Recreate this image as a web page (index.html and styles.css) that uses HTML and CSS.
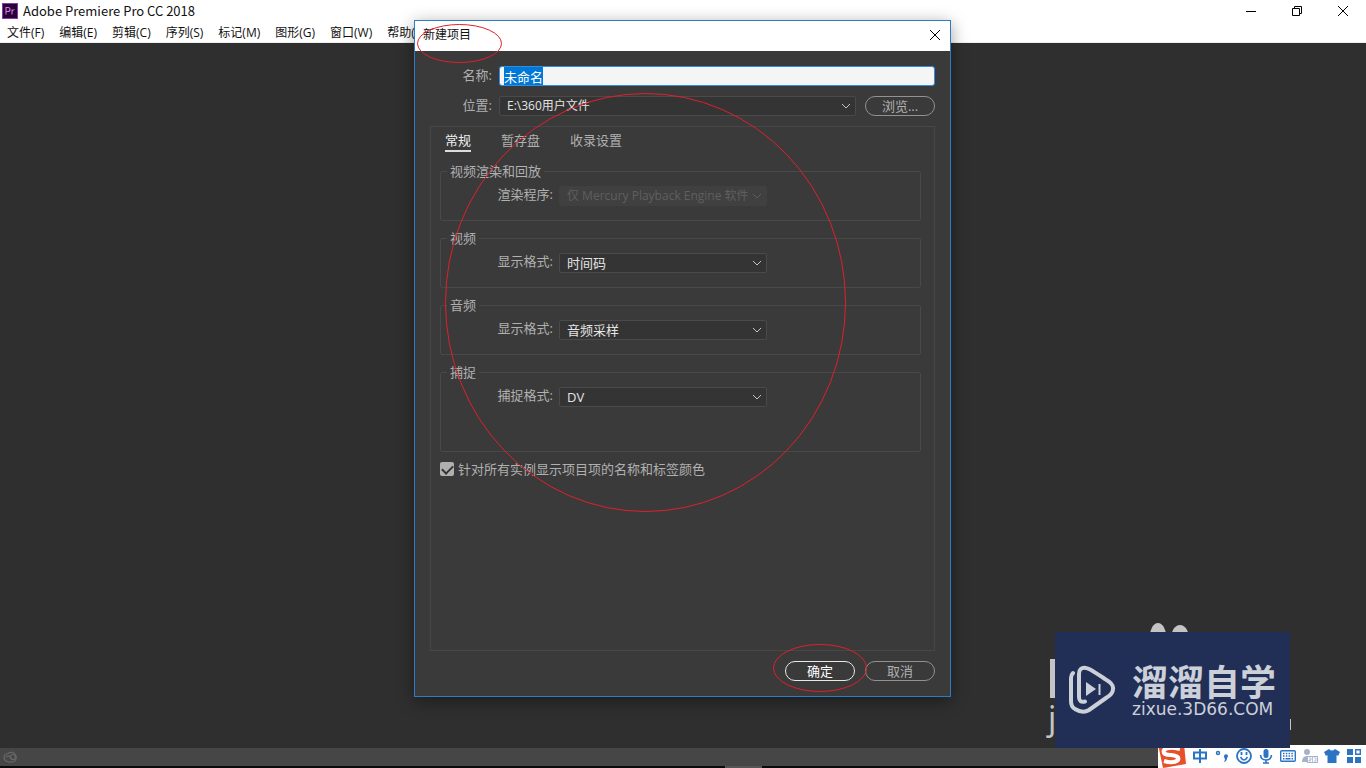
FILE: index.html
```html
<!DOCTYPE html>
<html lang="zh-CN">
<head>
<meta charset="utf-8">
<title>Adobe Premiere Pro CC 2018</title>
<link rel="stylesheet" href="styles.css">
</head>
<body>
<div class="app">
  <header class="titlebar">
    <svg class="app-icon" viewBox="0 0 16 16" aria-hidden="true"><rect width="16" height="16" fill="#8a3aa8"/><rect x="1" y="1" width="14" height="14" fill="#2a0038"/><path d="M4 11.500V4.500H6Q8 4.500 8 6.500T6 8.500H4M10 11.500V6.500M10 8.500Q10.500 6.500 12.500 6.700" fill="none" stroke="#cf78e8" stroke-width="1.100"/></svg>
    <h1 class="app-title">Adobe Premiere Pro CC 2018</h1>
    <div class="window-controls">
      <button type="button" aria-label="最小化"><svg viewBox="0 0 12 12"><path d="M1 6.500H11"/></svg></button>
      <button type="button" aria-label="还原"><svg viewBox="0 0 12 12"><path d="M1.500 3.500H8.500V10.500H1.500ZM3.500 3.500V1.500H10.500V8.500H8.500"/></svg></button>
      <button type="button" aria-label="关闭"><svg viewBox="0 0 12 12"><path d="M1 1L11 11M11 1L1 11"/></svg></button>
    </div>
  </header>
  <nav class="menubar">
    <button type="button">文件(F)</button>
    <button type="button">编辑(E)</button>
    <button type="button">剪辑(C)</button>
    <button type="button">序列(S)</button>
    <button type="button">标记(M)</button>
    <button type="button">图形(G)</button>
    <button type="button">窗口(W)</button>
    <button type="button">帮助(H)</button>
  </nav>
  <main class="workspace"></main>
  <footer class="statusbar">
    <svg viewBox="0 0 16 12" aria-hidden="true"><g fill="none" stroke="#686868" stroke-width="1.200"><path d="M5 10.500A4 4 0 0 1 5 2.500A5 5 0 1 1 10 11H5"/><circle cx="10" cy="6" r="2.500"/><path d="M3 6.500Q5 3.500 7 6L9 9"/></g></svg>
  </footer>
  <div class="screen-edge"><span></span></div>
</div>

<div class="dialog" role="dialog" aria-labelledby="dialog-title">
  <div class="dialog-head">
    <h2 id="dialog-title">新建项目</h2>
    <button type="button" aria-label="关闭"><svg viewBox="0 0 12 12"><path d="M1 1L11 11M11 1L1 11"/></svg></button>
  </div>
  <form class="dialog-body">
    <div class="field">
      <label for="name">名称:</label>
      <input class="name" id="name" type="text" value="未命名" autocomplete="off" spellcheck="false">
    </div>
    <div class="field">
      <label for="location">位置:</label>
      <div class="location">
        <div class="select">
          <select id="location"><option>E:\360用户文件</option></select>
          <svg viewBox="0 0 10 6"><path d="M1 1L5 5L9 1"/></svg>
        </div>
        <button class="pill" type="button">浏览...</button>
      </div>
    </div>
    <section class="panel">
      <div class="tabs" role="tablist">
        <button class="active" type="button" role="tab" aria-selected="true">常规</button>
        <button type="button" role="tab">暂存盘</button>
        <button type="button" role="tab">收录设置</button>
      </div>
      <div class="groups">
        <fieldset>
          <legend>视频渲染和回放</legend>
          <div class="row">
            <label for="renderer">渲染程序:</label>
            <div class="select disabled">
              <select id="renderer" disabled><option>仅 Mercury Playback Engine 软件</option></select>
              <svg viewBox="0 0 10 6"><path d="M1 1L5 5L9 1"/></svg>
            </div>
          </div>
        </fieldset>
        <fieldset>
          <legend>视频</legend>
          <div class="row">
            <label for="video">显示格式:</label>
            <div class="select">
              <select id="video"><option>时间码</option></select>
              <svg viewBox="0 0 10 6"><path d="M1 1L5 5L9 1"/></svg>
            </div>
          </div>
        </fieldset>
        <fieldset>
          <legend>音频</legend>
          <div class="row">
            <label for="audio">显示格式:</label>
            <div class="select">
              <select id="audio"><option>音频采样</option></select>
              <svg viewBox="0 0 10 6"><path d="M1 1L5 5L9 1"/></svg>
            </div>
          </div>
        </fieldset>
        <fieldset class="tall">
          <legend>捕捉</legend>
          <div class="row">
            <label for="capture">捕捉格式:</label>
            <div class="select">
              <select id="capture"><option>DV</option></select>
              <svg viewBox="0 0 10 6"><path d="M1 1L5 5L9 1"/></svg>
            </div>
          </div>
        </fieldset>
      </div>
      <div class="check">
        <input id="labels" type="checkbox" checked>
        <label for="labels">针对所有实例显示项目项的名称和标签颜色</label>
      </div>
    </section>
    <div class="actions">
      <button class="pill primary" type="button">确定</button>
      <button class="pill" type="button">取消</button>
    </div>
  </form>
  <svg class="marks" viewBox="0 0 537 677" aria-hidden="true">
    <ellipse cx="45.500" cy="23.500" rx="42" ry="19"/>
    <ellipse cx="231.500" cy="282.500" rx="200" ry="209"/>
    <ellipse cx="406" cy="648" rx="46.500" ry="23.500"/>
  </svg>
</div>

<div class="ime">
  <svg class="sogou" viewBox="0 0 28 24" aria-hidden="true"><path d="M0 0H26L28 20L5 24Z" fill="#e8502a"/><path d="M22 5Q10 2 6 6Q4 11 13 11Q22 12 20 16Q16 20 6 17" fill="none" stroke="#fff" stroke-width="4"/></svg>
  <svg viewBox="0 0 16 16" aria-label="中"><path d="M2 4.500H14V10.500H2ZM8 1V15" stroke-width="2"/></svg>
  <svg viewBox="0 0 16 16"><circle cx="4" cy="5" r="1.500" stroke-width="1.500"/><path d="M10 8a2 2 0 1 1 3 2q0 3-3 4q1-2 1-3q-1-1-1-3Z" fill="#2b74c4" stroke="none"/></svg>
  <svg viewBox="0 0 16 16"><circle cx="8" cy="8" r="7" stroke-width="1.800"/><path d="M4.500 9Q8 15 11.500 9" stroke-width="1.500"/><path d="M5.500 4V7M10.500 4V7" stroke-width="1.800"/></svg>
  <svg viewBox="0 0 16 16"><rect x="5.500" y="1" width="5" height="9" rx="2.500" fill="#2b74c4" stroke="none"/><path d="M2.500 7Q3 12 8 12T13.500 7M8 12V15M5 15H11" stroke-width="1.600"/></svg>
  <svg viewBox="0 0 16 16"><rect x=".7" y="2.700" width="14.600" height="10.600" rx="1" stroke-width="1.400"/><path d="M3 5.500H13M3 8H13" stroke-width="1.500" stroke-dasharray="1.500 1.300"/><path d="M3 10.800H4.500M5.500 10.800H10.500M11.500 10.800H13" stroke-width="1.400"/></svg>
  <svg viewBox="0 0 16 16"><g fill="#a7b2c8" stroke="none"><circle cx="5" cy="4" r="3"/><path d="M0 14Q0 8 5 8T8 10V14Z"/></g><rect x="5.500" y="8.500" width="10" height="6" fill="#fff" stroke="#a7b2c8"/><path d="M7 10H9V12H7V13H9M12 10H14V13H12M10.500 9V14" stroke="#a7b2c8" stroke-width=".8"/></svg>
  <svg viewBox="0 0 16 16"><path d="M5 1Q8 4 11 1L16 4L14 8L12.500 7V15H3.500V7L2 8L0 4Z" fill="#2b74c4" stroke="none"/></svg>
  <svg viewBox="0 0 16 16"><path d="M1 1H7V7H1ZM1 9H7V15H1ZM9 9H15V15H9Z" fill="#2b74c4" stroke="none"/><path d="M9.700 1.700H14.300V6.300H9.700Z" stroke-width="1.400"/></svg>
</div>

<div class="brand">
  <svg class="brand-back" viewBox="0 0 256 125" aria-hidden="true"><g fill="#c4c4c4"><ellipse cx="118" cy="13" rx="8" ry="13"/><ellipse cx="140" cy="15" rx="9" ry="13"/><rect x="10" y="36" width="8" height="39"/><rect x="249" y="96" width="2" height="11"/><text x="8" y="107" font-size="32" font-family="Noto Sans, sans-serif">j</text></g></svg>
  <div class="brand-card">
    <svg viewBox="0 0 48 50" aria-hidden="true"><g fill="none" stroke="#ccd0d8" stroke-width="4" stroke-linecap="round" stroke-linejoin="round"><path d="M17 36.500Q11 38 11 32V9Q11 2 18 3Q21 3 37 14Q46 19 45 24Q45 29 38 33L21 45Q15 49 7 44Q3 42 3 36V13Q3 10 5 8"/></g><path d="M18 17L28 24L18 31Z" fill="#ccd0d8"/><path d="M31.500 19V30" stroke="#ccd0d8" stroke-width="2"/></svg>
    <div class="brand-text">
      <strong>溜溜自学</strong>
      <span>zixue.3D66.COM</span>
    </div>
  </div>
</div>
<script src="main.js"></script>
</body>
</html>
```

FILE: main.js
```js
const nameField = document.getElementById("name");
nameField.focus();
nameField.select();
```

FILE: styles.css
```css
* { box-sizing: border-box; }
body {
  margin: 0;
  overflow: hidden;
  color: #111;
  font: 12px/18px "Open Sans", "Noto Sans CJK SC", sans-serif;
}
button, input, select { font: inherit; color: inherit; }
button { padding: 0; border: 0; background: none; }
h1, h2 { margin: 0; font-weight: 400; }
svg { display: block; }

.app { display: flex; flex-direction: column; height: 100vh; background: #2f2f2f; }
.titlebar { display: flex; align-items: center; height: 22px; padding-left: 2px; background: #fff; }
.app-icon { width: 16px; height: 16px; }
.app-title { flex: 1; margin-left: 5px; font: 13px/22px "Noto Sans CJK SC", sans-serif; }
.window-controls { display: flex; }
.window-controls button { display: grid; place-items: center; width: 46px; height: 22px; }
.window-controls svg, .dialog-head svg { width: 12px; height: 12px; fill: none; stroke: #000; }
.menubar {
  display: flex;
  gap: 15px;
  height: 21px;
  padding: 2px 0 0 7px;
  border-bottom: 1px solid #f0f0f0;
  background: #fff;
}
.workspace { flex: 1; }
.statusbar { height: 18px; padding: 3px; background: #464646; }
.statusbar svg { width: 16px; height: 12px; }
.screen-edge { display: flex; justify-content: center; height: 2px; background: #0a0a0a; }
.screen-edge span { width: 37px; margin-left: 121px; background: #555; }

.dialog {
  position: absolute;
  top: 20px;
  left: 414px;
  display: flex;
  flex-direction: column;
  width: 537px;
  height: 677px;
  border: 1px solid #2b7ec4;
  background: #3a3a3a;
  box-shadow: 0 4px 16px rgba(0, 0, 0, .4);
}
.dialog-head {
  display: flex;
  justify-content: space-between;
  height: 30px;
  padding: 5px 9px 0 8px;
  background: #fff;
}
.dialog-head h2 { font-size: 12px; }
.dialog-head button { align-self: flex-start; margin-top: 3px; }
.dialog-body {
  flex: 1;
  display: flex;
  flex-direction: column;
  gap: 10px;
  padding: 15px;
  color: #b0b0b0;
  font-size: 13px;
}
.field { display: grid; grid-template-columns: 62px 1fr; column-gap: 7px; height: 20px; }
.field label { text-align: right; }
.name {
  width: 100%;
  height: 20px;
  padding: 0 4px;
  border: 1px solid #2f8ee0;
  border-radius: 3px;
  outline: 0;
  background: #f5f5f5;
  color: #111;
  font-size: 13px;
  line-height: 16px;
}
.name::selection { background: #0078d7; color: #fff; }
.location { display: flex; gap: 9px; }
.location .select { flex: 1; }
.select { display: grid; align-items: center; color: #e4e4e4; font-size: 12px; }
.select select {
  grid-area: 1 / 1;
  appearance: none;
  width: 100%;
  height: 20px;
  padding: 0 18px 0 7px;
  border: 1px solid #4a4a4a;
  border-radius: 2px;
  background: #343434;
  line-height: 18px;
}
.select svg {
  grid-area: 1 / 1;
  justify-self: end;
  width: 10px;
  height: 6px;
  margin-right: 5px;
  fill: none;
  stroke: #c4c4c4;
  pointer-events: none;
}
.row select { font-size: 13px; }
.select select:disabled { border-color: #404040; background: #404040; color: #5f5f5f; opacity: 1; font-size: 12px; }
.disabled svg { stroke: #5f5f5f; }
.pill {
  width: 70px;
  height: 20px;
  border: 1px solid #929292;
  border-radius: 10px;
  color: #b0b0b0;
  font-size: 13px;
  line-height: 16px;
}
.primary { border-color: #e8e8e8; color: #fff; }

.panel { flex: 1; padding: 4px 13px 0 9px; border: 1px solid #474747; }
.tabs { display: flex; gap: 30px; height: 21px; padding-left: 5px; }
.tabs button { height: 21px; line-height: 18px; padding-bottom: 2px; border-bottom: 2px solid transparent; }
.tabs .active { border-color: #ddd; color: #f0f0f0; }
.groups { display: grid; gap: 8px; margin-top: 10px; }
fieldset { margin: 0; padding: 5px 0 14px; border: 1px solid #494949; border-radius: 2px; min-width: 0; }
.tall { padding-bottom: 44px; }
legend { margin-left: 6px; padding: 0 3px; height: 18px; }
.row { display: grid; grid-template-columns: 112px 208px; column-gap: 6px; height: 21px; }
.row label { text-align: right; }
.check { display: flex; align-items: center; gap: 4px; margin-top: 8px; }
.check input {
  appearance: none;
  display: grid;
  place-items: center;
  width: 14px;
  height: 14px;
  margin: 0;
  border-radius: 2px;
  background: #b0b0b0;
}
.check input:checked::before {
  content: "";
  width: 5px;
  height: 9px;
  margin-bottom: 2px;
  border: solid #333;
  border-width: 0 2px 2px 0;
  rotate: 45deg;
}
.actions { display: flex; justify-content: flex-end; gap: 10px; }
.marks { position: absolute; top: -1px; left: -1px; width: 537px; height: 677px; fill: none; stroke: #e0202c; pointer-events: none; }

.ime {
  position: absolute;
  right: 0;
  bottom: 0;
  display: flex;
  align-items: center;
  gap: 6px;
  height: 23px;
  padding: 0 4px 1px 0;
  background: #fff;
}
.ime svg { width: 16px; height: 16px; fill: none; stroke: #2b74c4; }
.ime .sogou { width: 28px; height: 24px; stroke: none; }

.brand {
  position: absolute;
  right: 70px;
  bottom: 20px;
  display: grid;
  grid-template-rows: 125px;
  width: 256px;
}
.brand-back, .brand-card { grid-area: 1 / 1; }
.brand-back { width: 256px; height: 125px; }
.brand-card {
  display: flex;
  align-items: center;
  gap: 16px;
  margin: 9px 6px 0 15px;
  padding-left: 13px;
  background: #212f57;
  color: #ccd0d8;
}
.brand-card svg { width: 48px; height: 50px; }
.brand-text { display: grid; gap: 2px; }
.brand-text strong { font: 700 36px/36px "Noto Sans CJK SC", sans-serif; }
.brand-text span { font: 17px/18px "DejaVu Sans", sans-serif; }
```
